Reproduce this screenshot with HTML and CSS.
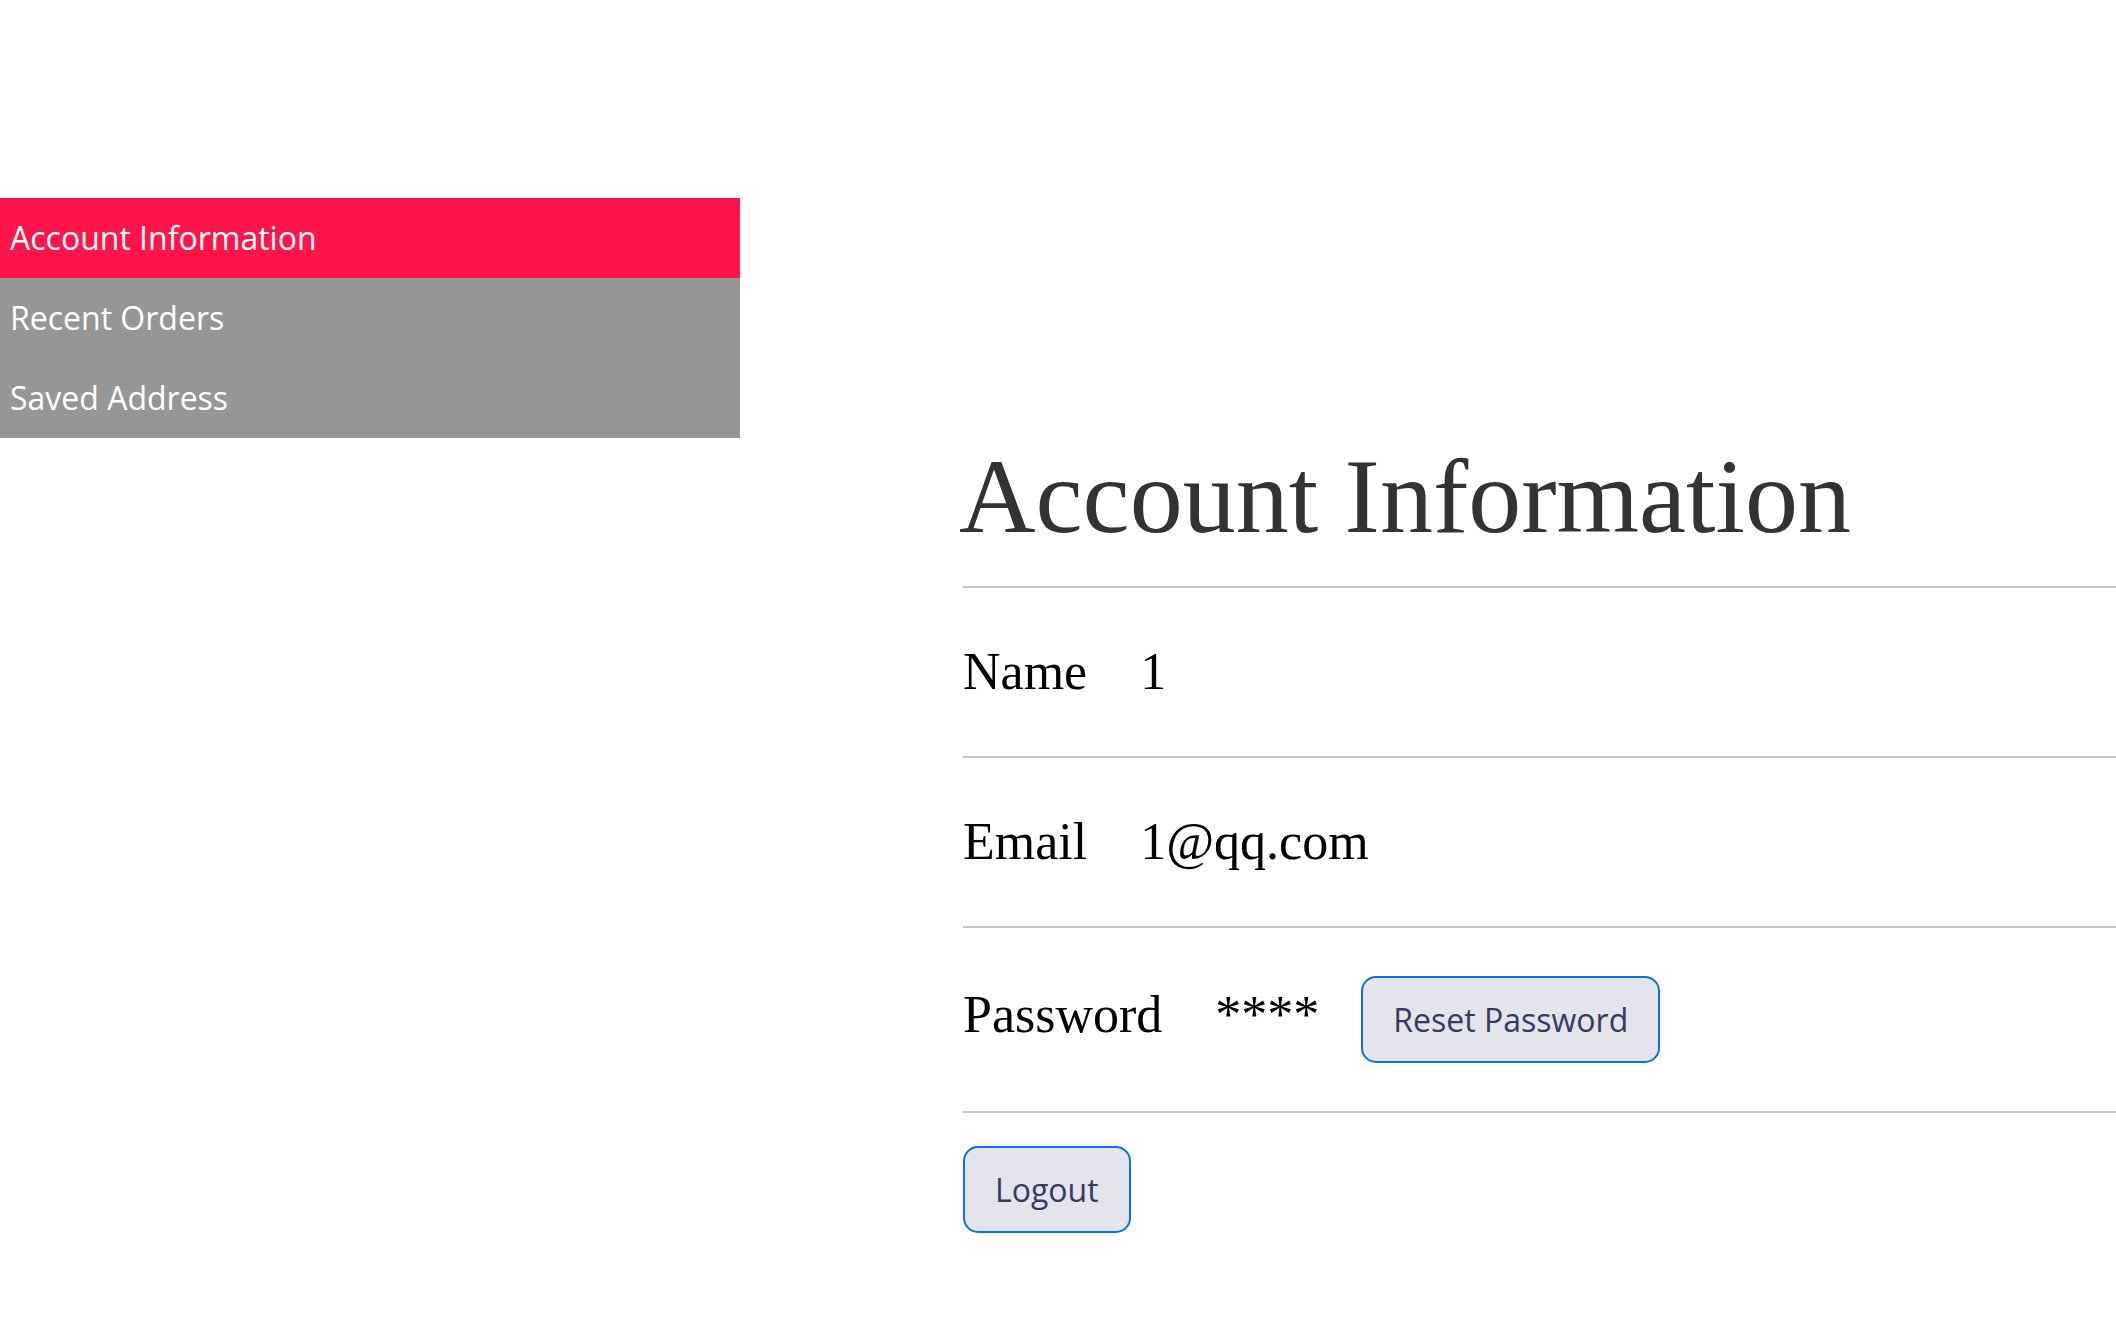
FILE: index.html
```html
<!DOCTYPE html>
<html lang="en">
<head>
<meta charset="utf-8">
<title>Account Information</title>
<link rel="stylesheet" href="styles.css">
</head>
<body>
<div class="page">
  <nav class="sidebar">
    <a class="nav-item active" href="#">Account Information</a>
    <a class="nav-item" href="#">Recent Orders</a>
    <a class="nav-item" href="#">Saved Address</a>
  </nav>
  <main class="content">
    <h1 class="title">Account Information</h1>
    <div class="row">
      <span class="label">Name</span>
      <span class="value">1</span>
    </div>
    <div class="row">
      <span class="label">Email</span>
      <span class="value">1@qq.com</span>
    </div>
    <div class="row">
      <span class="label">Password</span>
      <span class="value">****</span>
      <button class="btn" type="button">Reset Password</button>
    </div>
    <div class="actions">
      <button class="btn" type="button">Logout</button>
    </div>
  </main>
</div>
</body>
</html>
```
FILE: styles.css
```css
html, body {
  margin: 0;
  padding: 0;
  background: #ffffff;
}

.page {
  display: flex;
  align-items: flex-start;
  min-height: 1344px;
}

.sidebar {
  width: 740px;
  flex: 0 0 740px;
  margin-top: 198px;
  background: #969696;
  display: flex;
  flex-direction: column;
}

.nav-item {
  display: block;
  height: 80px;
  line-height: 80px;
  padding-left: 10px;
  font-family: "Open Sans", "Noto Sans", sans-serif;
  font-size: 32px;
  color: #ffffff;
  text-decoration: none;
}

.nav-item.active {
  background: #ff1549;
}

.content {
  flex: 1;
  padding-left: 223px;
  padding-top: 444px;
  font-family: "Liberation Serif", "Times New Roman", serif;
}

.title {
  margin: 0;
  font-family: "Liberation Serif", "Times New Roman", serif;
  font-weight: normal;
  font-size: 106px;
  line-height: 106px;
  color: #333333;
  text-indent: -4px;
  padding-bottom: 36px;
  border-bottom: 2px solid #c6c6c6;
}

.row {
  display: flex;
  align-items: baseline;
  padding: 48px 0;
  border-bottom: 2px solid #c6c6c6;
}

.label,
.value {
  font-size: 52px;
  line-height: 72px;
  color: #000000;
}

.label {
  margin-right: 53px;
}

.value {
  margin-right: 42px;
}

.btn {
  font-family: "Open Sans", "Noto Sans", sans-serif;
  font-size: 32px;
  line-height: 45px;
  color: #363b5e;
  background: #e3e4ec;
  border: 2px solid #0a6ff2;
  border-radius: 15px;
  padding: 19px 30px;
  cursor: pointer;
}

.actions {
  padding-top: 33px;
}
```
